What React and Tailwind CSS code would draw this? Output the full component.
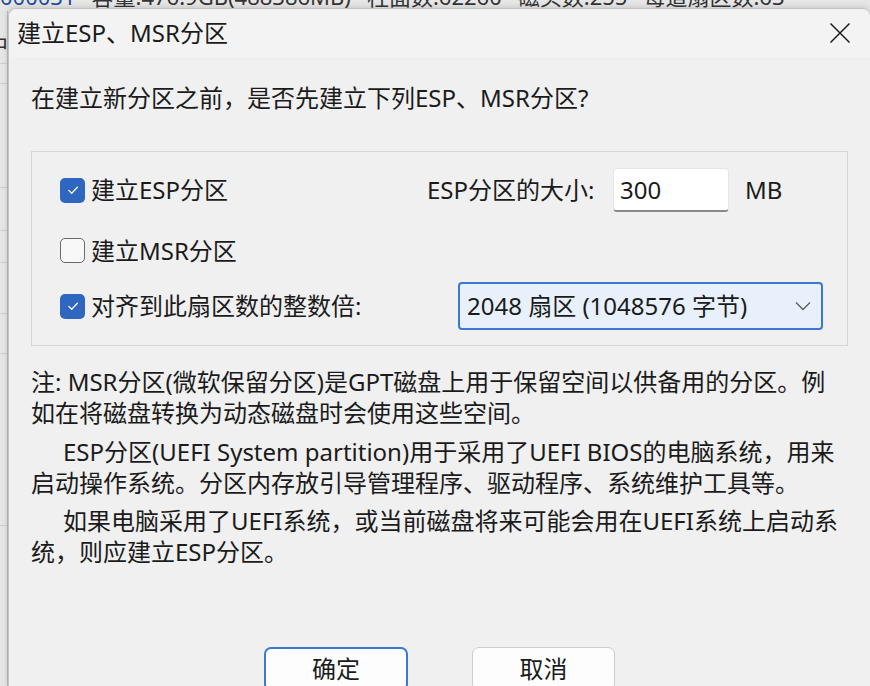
import React from 'react';

const font = "font-['Noto_Sans','Noto_Sans_CJK_SC',sans-serif]";

function Check({ checked }) {
  if (!checked) {
    return <span className="block h-[25px] w-[25px] shrink-0 rounded-[5px] border-[1.5px] border-[#6a6a6a] bg-[#f8f8f8]" />;
  }
  return (
    <span className="flex h-[25px] w-[25px] shrink-0 items-center justify-center rounded-[5px] bg-[#2f66c0]">
      <svg width="14" height="14" viewBox="0 0 14 14">
        <path d="M2.8 7.4 L5.7 10.2 L11.4 4.2" fill="none" stroke="#ffffff" strokeWidth="1.3" strokeLinecap="round" strokeLinejoin="round" />
      </svg>
    </span>
  );
}

// left edge of the window behind the dialog: grid rows
const stripRows = [53, 20, 104, 43, 32, 51, 40, 172, 171];

export default function App() {
  return (
    <div className={`relative h-[686px] w-[870px] overflow-hidden bg-[#e6e6e6] text-[#1b1b1b] ${font}`}>
      {/* window behind */}
      <div className="-mt-[19px] whitespace-nowrap text-[22px] leading-[30px] text-[#333]">
        <span className="text-[#1f4f9c]">000031</span>
        <span className="ml-[16px]">容量:476.9GB(488386MB)</span>
        <span className="ml-[16px]">柱面数:62260</span>
        <span className="ml-[16px]">磁头数:255</span>
        <span className="ml-[16px]">每道扇区数:63</span>
      </div>
      <div className="w-[8px] border-r border-[#bdbdbd]">
        {stripRows.map((h, i) => (
          <div key={i} style={{ height: h }} className="relative overflow-hidden border-b border-[#cfcfcf]">
            {i === 0 && (
              <span className="absolute -left-[14px] top-[22px] text-[22px] leading-none text-[#333]">中</span>
            )}
          </div>
        ))}
      </div>

      {/* dialog */}
      <div className="absolute bottom-0 left-[8px] right-0 top-[8px] rounded-t-[8px] border-l border-t border-[#c4c4c4] bg-[#f0f0f0] shadow-[0_0_6px_rgba(0,0,0,0.18)]">
        <div className="flex h-[48px] items-center justify-between rounded-t-[8px] bg-[#f3f3f3] pl-[8px] pr-[19px]">
          <span className="text-[24px] leading-none">建立ESP、MSR分区</span>
          <svg width="22" height="22" viewBox="0 0 22 22">
            <path d="M1.5 1.5 L20.5 20.5 M20.5 1.5 L1.5 20.5" stroke="#1b1b1b" strokeWidth="1.5" />
          </svg>
        </div>

        <div className="px-[22px] pt-[25px]">
          <div className="whitespace-nowrap text-[24px] leading-[31px]">在建立新分区之前，是否先建立下列ESP、MSR分区?</div>

          <div className="mt-[38px] border border-[#d6d6d6] pb-[15px] pl-[28px] pt-[16px] text-[24px]">
            <div className="flex h-[44px] items-center">
              <div className="flex w-[367px] items-center gap-[6px]">
                <Check checked />
                <span>建立ESP分区</span>
              </div>
              <span className="w-[186px] whitespace-nowrap">ESP分区的大小:</span>
              <div className="flex h-[44px] w-[116px] items-center rounded-[4px] border border-[#e6e6e6] border-b-2 border-b-[#8a8a8a] bg-white pl-[6px]">
                300
              </div>
              <span className="ml-[16px]">MB</span>
            </div>

            <div className="mt-[26px] flex h-[25px] items-center gap-[6px]">
              <Check />
              <span>建立MSR分区</span>
            </div>

            <div className="mt-[19px] flex h-[48px] items-center">
              <div className="flex w-[398px] items-center gap-[6px]">
                <Check checked />
                <span>对齐到此扇区数的整数倍:</span>
              </div>
              <div className="flex h-[48px] w-[365px] items-center justify-between rounded-[4px] border-2 border-[#3b79d1] bg-[#e8f1fb] pl-[7px] pr-[10px]">
                <span className="whitespace-nowrap">2048 扇区 (1048576 字节)</span>
                <svg width="16" height="10" viewBox="0 0 16 10">
                  <path d="M1 1.5 L8 8.5 L15 1.5" fill="none" stroke="#5c5c5c" strokeWidth="1.3" />
                </svg>
              </div>
            </div>
          </div>

          <div className="mt-[20px] whitespace-nowrap text-[24px] leading-[31px]">
            <div>注: MSR分区(微软保留分区)是GPT磁盘上用于保留空间以供备用的分区。例</div>
            <div>如在将磁盘转换为动态磁盘时会使用这些空间。</div>
            <div className="mt-[8px] pl-[32px]">ESP分区(UEFI System partition)用于采用了UEFI BIOS的电脑系统，用来</div>
            <div>启动操作系统。分区内存放引导管理程序、驱动程序、系统维护工具等。</div>
            <div className="mt-[7px] pl-[32px]">如果电脑采用了UEFI系统，或当前磁盘将来可能会用在UEFI系统上启动系</div>
            <div>统，则应建立ESP分区。</div>
          </div>
        </div>

        <div className="mt-[80px] flex justify-center gap-[64px] text-[24px]">
          <button className="flex h-[44px] w-[144px] items-center justify-center rounded-[7px] border-2 border-[#3b79d1] bg-[#fdfdfd]">
            确定
          </button>
          <button className="flex h-[44px] w-[143px] items-center justify-center rounded-[7px] border border-[#cdcdcd] bg-[#fdfdfd]">
            取消
          </button>
        </div>
      </div>
    </div>
  );
}
